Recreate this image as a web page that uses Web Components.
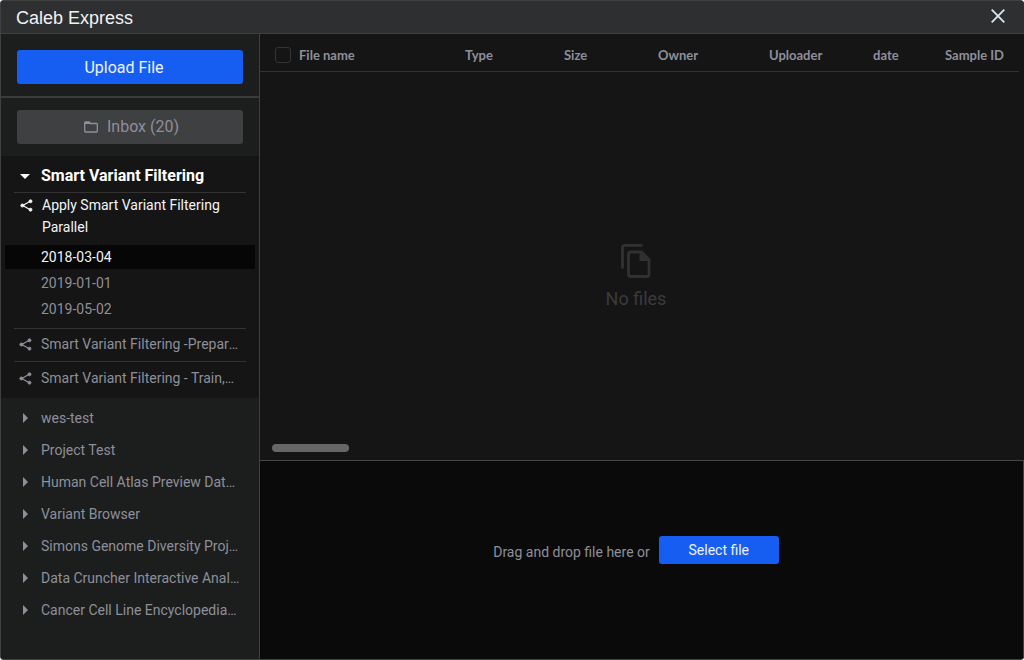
<!DOCTYPE html>
<html lang="en">
<head>
<meta charset="utf-8">
<title>Caleb Express</title>
<style>
html{background:#fff}
body{margin:0;font-family:Roboto,"Liberation Sans",sans-serif;color:#8e8f9a;
--line:#3f4040;--panel:#1c1e1d;--dark:#151515;--deep:#0a0a0a;--blue:#165df2;--bright:#f2f4f8}
</style>
</head>
<body>
<file-window></file-window>
<script>
const define = (name, html) => customElements.define(name, class extends HTMLElement {
  connectedCallback() {
    if (this.shadowRoot) return;
    const root = this.attachShadow({ mode: 'open' });
    const t = document.createElement('template');
    t.innerHTML = '<style>*{box-sizing:border-box}button{font:inherit;border:0;padding:0;margin:0;cursor:pointer;background:none;color:inherit}</style>' + html;
    root.append(t.content.cloneNode(true));
  }
});

define('window-header', `
<style>
:host{display:flex;align-items:center;justify-content:space-between;height:33px;padding:0 18px 0 15px;box-sizing:border-box;background:#2e2f31;border-bottom:1px solid var(--line)}
h1{margin:0;padding-top:2px;font:400 18px/30px "Liberation Sans",Arial,sans-serif;color:#f2f2f2}
button{display:flex;padding-bottom:2px}
svg{display:block}
</style>
<h1><slot></slot></h1>
<button aria-label="Close"><svg width="15" height="14" viewBox="0 0 15 14" fill="none" stroke="#dde5f0" stroke-width="1.800"><path d="M.7.7 13.3 13.3M13.3.7.7 13.3"/></svg></button>`);

define('action-button', `
<style>
:host{display:block}
button{display:flex;align-items:center;justify-content:center;width:100%;height:34px;padding:2px 12px 0 0;border-radius:3px;background:var(--blue);color:#eef2ff;font-size:16px;line-height:20px}
:host([muted]) button{background:#3f4041;color:#8e8f9a;padding:0 0 0 3px;gap:9px}
:host([small]) button{height:28px;padding:0;font-size:14px}
</style>
<button><slot name="icon"></slot><span><slot></slot></span></button>`);

define('task-row', `
<style>
:host{display:block}
button{display:flex;align-items:flex-start;width:100%;padding:0 20px 0 18px;text-align:left;font-size:14px;line-height:22px}
svg{flex:none;width:13px;height:13px;margin:5px 9px 0 0}
span{min-width:0;flex:1;overflow:hidden;text-overflow:ellipsis;white-space:nowrap}
:host([open]) button{color:var(--bright);padding-left:19px}
:host([open]) span{white-space:normal}
</style>
<button><svg viewBox="0 0 14 14" fill="currentColor" stroke="currentColor"><path d="M11 2.5 3 7l8 4.500" fill="none" stroke-width="1.300"/><circle cx="11.300" cy="2.500" r="1.600"/><circle cx="2.500" cy="7" r="1.600"/><circle cx="11.300" cy="11.500" r="1.600"/></svg><span><slot></slot></span></button>`);

define('date-row', `
<style>
:host{display:block;padding:0 4px 2px}
button{display:block;width:100%;height:24px;padding-left:36px;text-align:left;font-size:14px;line-height:24px}
:host([selected]) button{background:#060606;color:var(--bright)}
</style>
<button><slot></slot></button>`);

define('project-row', `
<style>
:host{display:block}
button{display:flex;align-items:center;width:100%;height:32px;padding:0 18px 0 19px;text-align:left;font-size:14px;line-height:20px}
svg{flex:none;width:10px;height:10px;margin:0 11px 0 0}
span{min-width:0;flex:1;overflow:hidden;text-overflow:ellipsis;white-space:nowrap}
:host([open]) button{height:36px;padding-top:4px;color:#fff;font-size:16px;font-weight:700}
:host([open]) svg{transform:rotate(90deg)}
</style>
<button><svg viewBox="0 0 10 10" fill="currentColor"><path d="M3 0 8 5 3 10z"/></svg><span><slot></slot></span></button>`);

define('side-bar', `
<style>
:host{display:flex;flex-direction:column;background:var(--panel);border-right:1px solid var(--line)}
.upload{padding:16px 16px 12px;border-bottom:2px solid #3a3c3b}
.inbox{padding:12px 16px}
.group{background:var(--dark);padding-bottom:9px}
hr{border:0;height:1px;background:#333;margin:0 13px}
.dates{padding-top:7px;padding-bottom:5px}
.first{padding-top:1px}
.task{padding:4px 0 6px}
.task:last-child{padding:5px 0 0}
.others{padding-top:4px}
</style>
<div class="upload"><action-button>Upload File</action-button></div>
<div class="inbox"><action-button muted><svg slot="icon" width="14" height="12" viewBox="0 0 14 12" fill="none" stroke="currentColor" stroke-width="1.300"><path d="M.7 10.300V1.700q0-.7.7-.7h3.800l1.300 1.500h6.100q.7 0 .7.700v7.100q0 .7-.7.700H1.400q-.7 0-.7-.7z"/><path d="M1 2h5" stroke-width="2"/></svg>Inbox (20)</action-button></div>
<div class="group">
<project-row open>Smart Variant Filtering</project-row>
<hr>
<div class="first"><task-row open>Apply Smart Variant Filtering Parallel</task-row></div>
<div class="dates"><date-row selected>2018-03-04</date-row><date-row>2019-01-01</date-row><date-row>2019-05-02</date-row></div>
<hr>
<div class="task"><task-row>Smart Variant Filtering -Prepare Data</task-row></div>
<hr>
<div class="task"><task-row>Smart Variant Filtering - Train,Test</task-row></div>
</div>
<div class="others">
<project-row>wes-test</project-row>
<project-row>Project Test</project-row>
<project-row>Human Cell Atlas Preview Datasets</project-row>
<project-row>Variant Browser</project-row>
<project-row>Simons Genome Diversity Project</project-row>
<project-row>Data Cruncher Interactive Analysis</project-row>
<project-row>Cancer Cell Line Encyclopedia…</project-row>
</div>`);

define('file-table', `
<style>
:host{display:flex;flex-direction:column;flex:1;background:var(--dark)}
.head{margin-right:5px;border-bottom:1px solid #333}
table{width:100%;table-layout:fixed;border-collapse:collapse}
th{height:37px;padding:5px 0 0;text-align:left;white-space:nowrap;font:700 13px/20px Lato,sans-serif}
.c0{width:39px}.c1{width:166px}.c2{width:99px}.c3{width:94px}.c4{width:111px}.c5{width:104px}.c6{width:72px}.c7{width:74px}
th:first-child{padding-left:15px}
input{appearance:none;display:block;width:16px;height:16px;margin:0;border:1px solid #333435;border-radius:3px}
.empty{flex:1;display:flex;flex-direction:column;align-items:center;justify-content:center;gap:9px;color:#3a3b3c;font-size:18px;line-height:24px;padding:38px 12px 0 0}
svg{display:block;color:#303132}
.bar{width:77px;height:8px;margin:0 0 8px 12px;border-radius:4px;background:#666}
</style>
<div class="head"><table><colgroup><col class="c0"><col class="c1"><col class="c2"><col class="c3"><col class="c4"><col class="c5"><col class="c6"><col class="c7"></colgroup>
<thead><tr><th><input type="checkbox" aria-label="Select all files"></th><th>File name</th><th>Type</th><th>Size</th><th>Owner</th><th>Uploader</th><th>date</th><th>Sample ID</th></tr></thead></table></div>
<div class="empty"><svg width="30" height="34" viewBox="0 0 30 34" fill="none" stroke="currentColor" stroke-width="2.800"><path d="M1.500 24.500V3.400q0-2 2-2H21.500"/><path d="M9.500 8h11l7.500 7.500V30.500q0 2-2 2H9.500q-2 0-2-2V10q0-2 2-2z"/><path d="M18.500 8v9H28z" fill="currentColor" stroke="none"/></svg><span>No files</span></div>
<div class="bar"></div>`);

define('drop-zone', `
<style>
:host{display:flex;align-items:center;justify-content:center;gap:9px;flex:none;height:calc(30vh + 1px);min-height:120px;padding:0 11px 21px 0;box-sizing:border-box;background:var(--deep);border-right:1px solid var(--line)}
span{font-size:14px;line-height:20px;padding-top:4px}
action-button{width:120px}
</style>
<span>Drag and drop file here or</span><action-button small>Select file</action-button>`);

define('file-window', `
<style>
:host{display:flex;flex-direction:column;min-height:100vh;box-sizing:border-box;border:1px solid var(--line);border-right:0;border-radius:4px;overflow:hidden;background:var(--panel)}
.body{flex:1;display:grid;grid-template-columns:259px minmax(0,1fr)}
main{display:flex;flex-direction:column}
drop-zone{border-top:1px solid #464646}
</style>
<window-header>Caleb Express</window-header>
<div class="body"><side-bar></side-bar><main><file-table></file-table><drop-zone></drop-zone></main></div>`);
</script>
</body>
</html>
